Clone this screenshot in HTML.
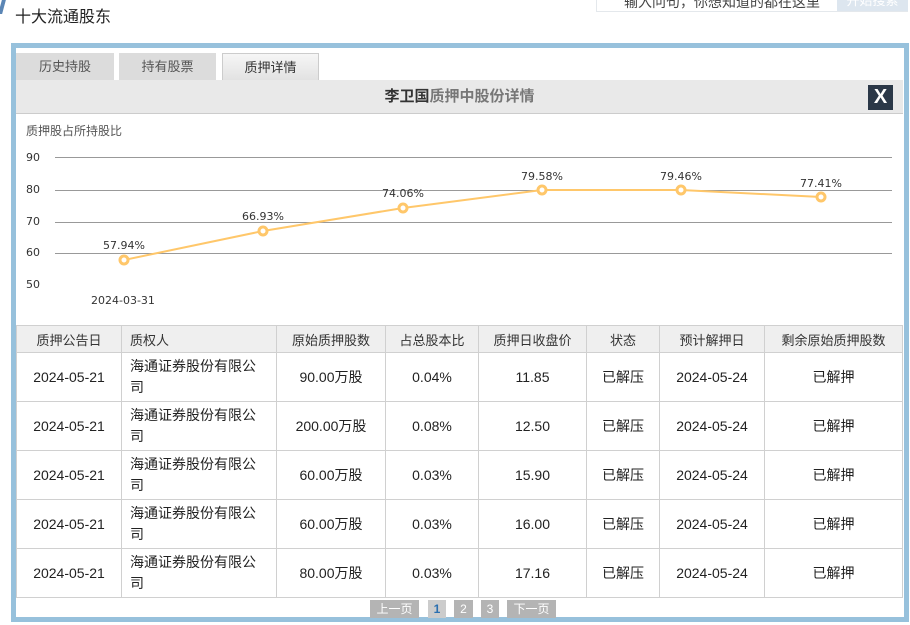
<!DOCTYPE html><html><head><meta charset="utf-8"><style>
*{margin:0;padding:0;box-sizing:border-box}
body{width:910px;height:625px;background:#fff;font-family:"Liberation Sans","Noto Sans CJK SC",sans-serif;position:relative;overflow:hidden;color:#333}
.abs{position:absolute}
table{border-collapse:collapse;position:absolute;left:16px;top:325px;width:887px;font-size:14px}
td,th{border:1px solid #d0d0d0;text-align:center;color:#222;font-weight:normal}
th{background:#efefef;height:27px;font-size:13px;color:#333}
td{height:49px}
td.l{text-align:left;padding-left:8px;line-height:21px}
.pg{position:absolute;top:600px;height:18px;background:#b4b4b4;color:#fff;font-size:12px;line-height:18px;text-align:center}
</style></head><body>
<div class="abs" style="left:0;top:0;width:4px;height:14px;background:#5b86b5;transform:skewX(-15deg)"></div>
<div class="abs" style="left:15px;top:3px;font-size:16px;color:#222">十大流通股东</div>
<div class="abs" style="left:596px;top:-6px;width:312px;height:18px;border:1px solid #e4e8ec;background:#fff"></div>
<div class="abs" style="left:624px;top:-8px;font-size:14px;color:#444">输入问句，你想知道的都在这里</div>
<div class="abs" style="left:837px;top:-6px;width:71px;height:17px;background:#dde6ef;color:#fff;font-size:13px;text-align:center;line-height:14px">开始搜索</div>
<div class="abs" style="left:11px;top:43px;width:898px;height:579px;border:5px solid #97c1dc;background:#fff"></div>
<div class="abs" style="left:16px;top:53px;width:98px;height:27px;background:#dcdcdc;font-size:13px;color:#555;text-align:center;line-height:27px">历史持股</div>
<div class="abs" style="left:119px;top:53px;width:97px;height:27px;background:#dcdcdc;font-size:13px;color:#555;text-align:center;line-height:27px">持有股票</div>
<div class="abs" style="left:222px;top:53px;width:97px;height:27px;background:linear-gradient(#f6f6f6,#e2e2e2);border:1px solid #ccc;border-bottom:none;font-size:13px;color:#333;text-align:center;line-height:27px">质押详情</div>
<div class="abs" style="left:16px;top:80px;width:887px;height:34px;background:#e9e9e9;border-bottom:1px solid #ccc;text-align:center;line-height:34px;font-size:15px;font-weight:bold;color:#777"><span style="color:#333">李卫国</span>质押中股份详情</div>
<div class="abs" style="left:868px;top:85px;width:25px;height:25px;background:#2b3848;color:#fff;font-weight:bold;font-size:20px;text-align:center;line-height:25px">X</div>
<div class="abs" style="left:26px;top:122px;font-size:12px;color:#555">质押股占所持股比</div>
<svg class="abs" style="left:0;top:0" width="910" height="325">
<g stroke="#999" stroke-width="1"><line x1="55" y1="157.5" x2="892" y2="157.5"/><line x1="55" y1="190.5" x2="892" y2="190.5"/><line x1="55" y1="222.5" x2="892" y2="222.5"/><line x1="55" y1="253.5" x2="892" y2="253.5"/></g>
<g font-size="12" fill="#333" font-family="DejaVu Sans,sans-serif" font-size="11"><text x="26" y="161" font-size="11">90</text><text x="26" y="193" font-size="11">80</text><text x="26" y="225" font-size="11">70</text><text x="26" y="256" font-size="11">60</text><text x="26" y="288" font-size="11">50</text><text x="91" y="304" font-size="11">2024-03-31</text></g>
<polyline fill="none" stroke="#ffc76a" stroke-width="2" points="124,260 263,231 403,208 542,190 681,190 821,197"/>
<g fill="#fff" stroke="#ffc76a" stroke-width="3"><circle cx="124" cy="260" r="4"/><circle cx="263" cy="231" r="4"/><circle cx="403" cy="208" r="4"/><circle cx="542" cy="190" r="4"/><circle cx="681" cy="190" r="4"/><circle cx="821" cy="197" r="4"/></g>
<g font-size="11" fill="#333" font-family="DejaVu Sans,sans-serif" text-anchor="middle"><text x="124" y="249">57.94%</text><text x="263" y="220">66.93%</text><text x="403" y="197">74.06%</text><text x="542" y="180">79.58%</text><text x="681" y="180">79.46%</text><text x="821" y="187">77.41%</text></g>
</svg>
<table>
<tr><th style="width:105px">质押公告日</th><th style="width:155px;text-align:left;padding-left:8px">质权人</th><th style="width:109px">原始质押股数</th><th style="width:93px">占总股本比</th><th style="width:108px">质押日收盘价</th><th style="width:73px">状态</th><th style="width:105px">预计解押日</th><th>剩余原始质押股数</th></tr>
<tr><td>2024-05-21</td><td class="l">海通证券股份有限公<br>司</td><td>90.00万股</td><td>0.04%</td><td>11.85</td><td>已解压</td><td>2024-05-24</td><td>已解押</td></tr>
<tr><td>2024-05-21</td><td class="l">海通证券股份有限公<br>司</td><td>200.00万股</td><td>0.08%</td><td>12.50</td><td>已解压</td><td>2024-05-24</td><td>已解押</td></tr>
<tr><td>2024-05-21</td><td class="l">海通证券股份有限公<br>司</td><td>60.00万股</td><td>0.03%</td><td>15.90</td><td>已解压</td><td>2024-05-24</td><td>已解押</td></tr>
<tr><td>2024-05-21</td><td class="l">海通证券股份有限公<br>司</td><td>60.00万股</td><td>0.03%</td><td>16.00</td><td>已解压</td><td>2024-05-24</td><td>已解押</td></tr>
<tr><td>2024-05-21</td><td class="l">海通证券股份有限公<br>司</td><td>80.00万股</td><td>0.03%</td><td>17.16</td><td>已解压</td><td>2024-05-24</td><td>已解押</td></tr>
</table>
<div class="pg" style="left:370px;width:49px">上一页</div>
<div class="pg" style="left:428px;width:18px;background:#ccc;color:#2a6fb0;font-weight:bold">1</div>
<div class="pg" style="left:454px;width:19px">2</div>
<div class="pg" style="left:481px;width:18px">3</div>
<div class="pg" style="left:507px;width:49px">下一页</div>
</body></html>
